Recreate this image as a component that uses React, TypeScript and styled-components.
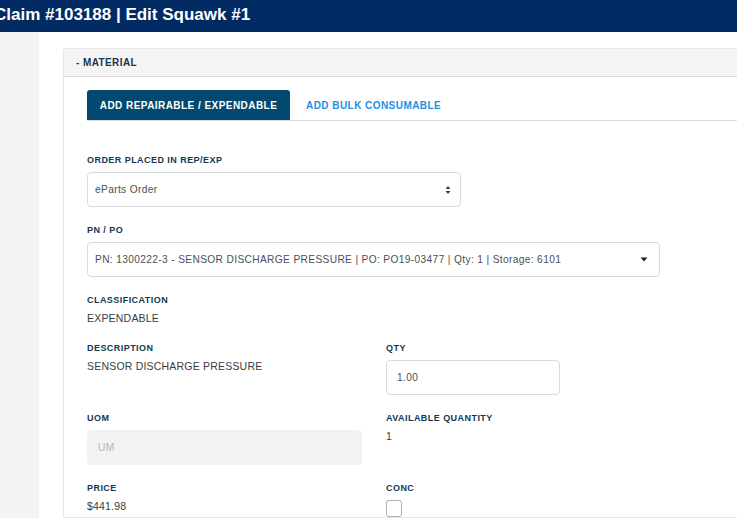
import React from "react";
import styled, { createGlobalStyle } from "styled-components";

const Global = createGlobalStyle`
  html, body { margin: 0; padding: 0; background: #fff; }
  body { font-family: "Liberation Sans", Arial, sans-serif; overflow: hidden; }
  * { box-sizing: border-box; }
`;

const Page = styled.div`
  width: 737px;
  height: 518px;
  display: flex;
  flex-direction: column;
  overflow: hidden;
`;

const TopBar = styled.header`
  height: 32px;
  flex: none;
  background: #022b63;
  display: flex;
  align-items: center;
  overflow: hidden;
`;

const Title = styled.h1`
  margin: 0 0 3px -6px;
  color: #fff;
  font-size: 17px;
  font-weight: 700;
  white-space: nowrap;
`;

const Body = styled.div`
  flex: 1;
  display: flex;
  min-height: 0;
`;

const Sidebar = styled.aside`
  width: 39px;
  flex: none;
  background: #f2f3f5;
`;

const Main = styled.main`
  flex: 1;
  padding: 16px 0 0 24px;
  min-width: 0;
`;

const Card = styled.section`
  border: 1px solid #e6e6e6;
  border-right: none;
  border-radius: 3px 0 0 0;
  height: 100%;
`;

const CardHeader = styled.div`
  height: 28px;
  background: #f4f4f4;
  border-bottom: 1px solid #dcdcdc;
  display: flex;
  align-items: center;
  padding-left: 12px;
  font-size: 10px;
  font-weight: 700;
  color: #1c3548;
  letter-spacing: 0.4px;
`;

const CardBody = styled.div`
  padding: 13px 0 0 23px;
`;

const Tabs = styled.nav`
  display: flex;
  align-items: stretch;
  height: 31px;
  border-bottom: 1px solid #dddddd;
`;

const Tab = styled.div<{ $active?: boolean }>`
  display: flex;
  align-items: center;
  padding: 0 ${(p) => (p.$active ? "12px" : "16px")};
  width: ${(p) => (p.$active ? "203px" : "auto")};
  justify-content: center;
  border-radius: 3px 3px 0 0;
  background: ${(p) => (p.$active ? "#03496f" : "transparent")};
  color: ${(p) => (p.$active ? "#fff" : "#1b91e4")};
  font-size: 10px;
  font-weight: 700;
  letter-spacing: 0.45px;
  white-space: nowrap;
`;

const Form = styled.div`
  padding-top: 33px;
  width: 573px;
`;

const Row = styled.div`
  display: grid;
  grid-template-columns: 274px 1fr;
  column-gap: 25px;
`;

const Group = styled.div<{ $gap?: number }>`
  margin-bottom: ${(p) => p.$gap ?? 17}px;
`;

const Label = styled.div`
  font-size: 9px;
  line-height: 12px;
  font-weight: 700;
  color: #143750;
  letter-spacing: 0.45px;
  margin-bottom: 6px;
  white-space: nowrap;
`;

const Value = styled.div`
  font-size: 10.5px;
  line-height: 12px;
  color: #3c3c3c;
  letter-spacing: 0.2px;
  white-space: nowrap;
`;

const Field = styled.div<{ $width: number; $disabled?: boolean }>`
  width: ${(p) => p.$width}px;
  height: 35px;
  border: 1px solid ${(p) => (p.$disabled ? "#f1f2f2" : "#d6dbe1")};
  background: ${(p) => (p.$disabled ? "#f1f2f2" : "#fff")};
  border-radius: 4px;
  display: flex;
  align-items: center;
  justify-content: space-between;
  padding: 0 9px 0 ${(p) => (p.$disabled ? 10 : 7)}px;
  font-size: 10.2px;
  color: ${(p) => (p.$disabled ? "#b5b8bb" : "#4a4f55")};
  letter-spacing: 0.35px;
  white-space: nowrap;
`;

const InputField = styled(Field)`
  padding-left: 10px;
`;

const Check = styled.div`
  width: 16px;
  height: 17px;
  margin-top: 3px;
  border: 1px solid #aab2ba;
  border-radius: 3px;
  background: #fff;
`;

const UpDown = () => (
  <svg width="6" height="10" viewBox="0 0 6 10">
    <path d="M3 1 L5.5 4 H0.5 Z" fill="#3a4350" />
    <path d="M3 9 L5.5 6 H0.5 Z" fill="#3a4350" />
  </svg>
);

const Caret = () => (
  <svg width="8" height="5" viewBox="0 0 8 5" style={{ marginRight: 2 }}>
    <path d="M0.5 0.5 H7.5 L4 4.5 Z" fill="#1f2328" />
  </svg>
);

export default function App() {
  return (
    <Page>
      <Global />
      <TopBar>
        <Title>Claim #103188 | Edit Squawk #1</Title>
      </TopBar>
      <Body>
        <Sidebar />
        <Main>
          <Card>
            <CardHeader>- MATERIAL</CardHeader>
            <CardBody>
              <Tabs>
                <Tab $active>ADD REPAIRABLE / EXPENDABLE</Tab>
                <Tab>ADD BULK CONSUMABLE</Tab>
              </Tabs>
              <Form>
                <Group>
                  <Label>ORDER PLACED IN REP/EXP</Label>
                  <Field $width={374}>
                    <span>eParts Order</span>
                    <UpDown />
                  </Field>
                </Group>
                <Group>
                  <Label>PN / PO</Label>
                  <Field $width={573}>
                    <span>PN: 1300222-3 - SENSOR DISCHARGE PRESSURE | PO: PO19-03477 | Qty: 1 | Storage: 6101</span>
                    <Caret />
                  </Field>
                </Group>
                <Group $gap={18}>
                  <Label>CLASSIFICATION</Label>
                  <Value>EXPENDABLE</Value>
                </Group>
                <Row>
                  <Group>
                    <Label>DESCRIPTION</Label>
                    <Value>SENSOR DISCHARGE PRESSURE</Value>
                  </Group>
                  <Group>
                    <Label>QTY</Label>
                    <InputField $width={174}>1.00</InputField>
                  </Group>
                </Row>
                <Row>
                  <Group>
                    <Label>UOM</Label>
                    <InputField $width={275} $disabled>UM</InputField>
                  </Group>
                  <Group>
                    <Label>AVAILABLE QUANTITY</Label>
                    <Value>1</Value>
                  </Group>
                </Row>
                <Row>
                  <Group>
                    <Label>PRICE</Label>
                    <Value>$441.98</Value>
                  </Group>
                  <Group>
                    <Label>CONC</Label>
                    <Check />
                  </Group>
                </Row>
              </Form>
            </CardBody>
          </Card>
        </Main>
      </Body>
    </Page>
  );
}
